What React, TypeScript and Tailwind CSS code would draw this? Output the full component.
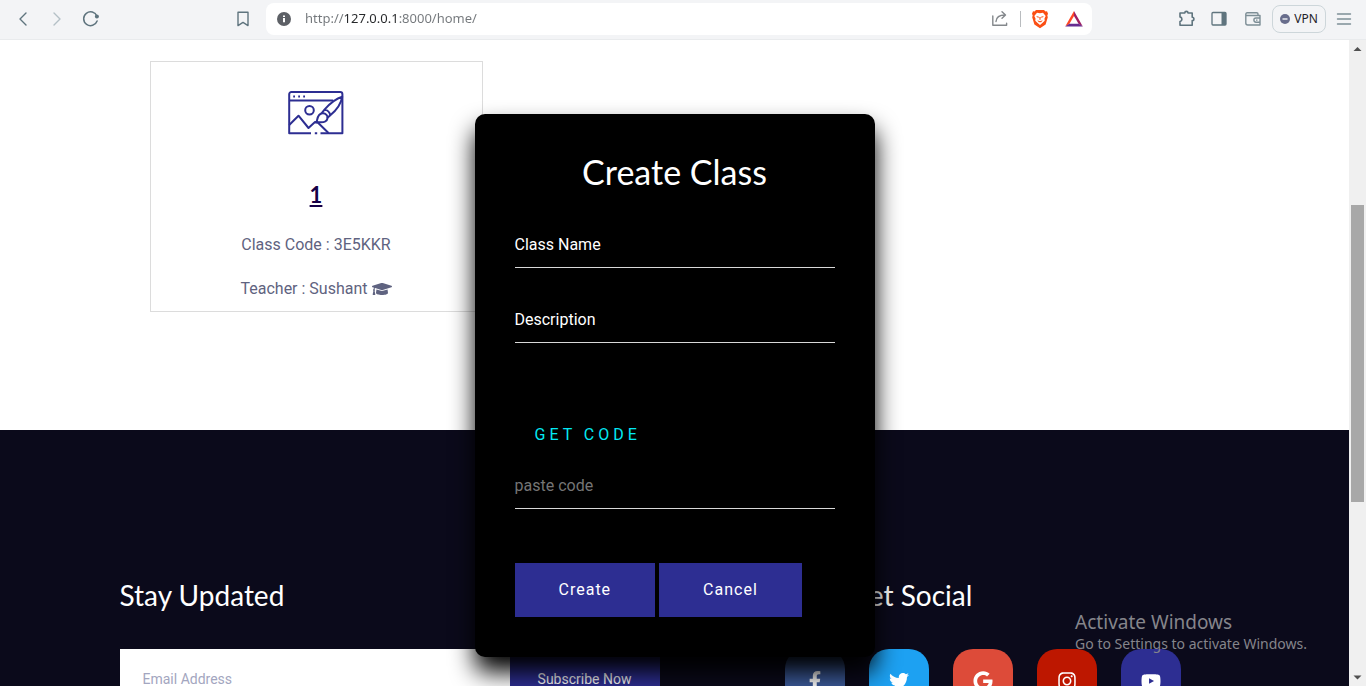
import React from "react";
import { FaFacebookF, FaTwitter, FaGoogle, FaInstagram, FaYoutube, FaGraduationCap } from "react-icons/fa";

const heading = "font-['Lato',sans-serif]";

function ToolButton({ label, className = "", children }: { label: string; className?: string; children: React.ReactNode }) {
  return (
    <button type="button" aria-label={label} className={`flex size-5 shrink-0 items-center justify-center ${className}`}>
      {children}
    </button>
  );
}

function Line({ d, color = "#5f747e", width = 1.4 }: { d: string; color?: string; width?: number }) {
  return (
    <svg viewBox="0 0 20 20" className="size-5" fill="none" stroke={color} strokeWidth={width} strokeLinecap="round" strokeLinejoin="round">
      <path d={d} />
    </svg>
  );
}

function BrowserBar() {
  return (
    <header className="flex h-10 shrink-0 items-center border-b border-[#e9ebed] bg-[#f3f4f6] pr-3 pb-px pl-[13px] font-['Noto_Sans',sans-serif]">
      <ToolButton label="Back"><Line d="M13 4 7 10l6 6" /></ToolButton>
      <ToolButton label="Forward" className="ml-[14px]"><Line d="m7 4 6 6-6 6" color="#b4c0c6" /></ToolButton>
      <ToolButton label="Reload" className="ml-[14px]">
        <svg viewBox="0 0 20 20" className="size-5" fill="none">
          <path d="M16.1 12A6.9 6.9 0 1 1 16 7.2" stroke="#5f747e" strokeWidth="1.5" strokeLinecap="round" />
          <circle cx="15.9" cy="7.6" r="2" fill="#5f747e" />
        </svg>
      </ToolButton>
      <ToolButton label="Bookmark" className="ml-[132px]"><Line d="M5 3.2h10v13.4l-5-3.2-5 3.2z" /></ToolButton>
      <div className="ml-[13px] flex h-8 max-w-[826px] flex-1 items-center rounded-lg bg-white pr-2 pl-2">
        <ToolButton label="Site information">
          <svg viewBox="0 0 20 20" className="size-5">
            <circle cx="10" cy="10" r="7" fill="#5d6066" />
            <path d="M9 9h2v4.3H9zM9 6.4h2v1.7H9z" fill="#fff" />
          </svg>
        </ToolButton>
        <input
          aria-label="Address"
          defaultValue="http://127.0.0.1:8000/home/"
          className="ml-[11px] min-w-0 flex-1 bg-[linear-gradient(90deg,#73777b_39px,#26282a_39px,#26282a_93px,#73777b_93px)] bg-clip-text text-[13px] text-transparent caret-black outline-none"
        />
        <ToolButton label="Share">
          <svg viewBox="0 0 20 20" className="size-5" fill="none" stroke="#84888c" strokeWidth="1.4" strokeLinecap="round" strokeLinejoin="round">
            <path d="M2.800 7v9.300h13.800v-2M6 12.500c.3-4.200 3-6.500 9-6.500M12 2.700 15.500 6 12 9.300" />
          </svg>
        </ToolButton>
        <span className="ml-[10px] h-4 w-px bg-[#b9bcbf]" />
        <ToolButton label="Brave Shields" className="ml-[9px]">
          <svg viewBox="0 0 20 20" className="size-5">
            <path d="M6 1h8l1.500 1.500 1.500-.2 1 2.500-.7 1.700.5 1.700-2.200 7.200L10 19.200l-5.600-3.800L2.200 8.200l.5-1.700L2 4.800l1-2.500 1.500.2z" fill="#fb4f14" />
            <path d="m7 3.700 3 .6 3-.6 2.700 3.200-1.200 2.600.2 2.300L12.300 14 10 16l-2.300-2-2.400-2.200.2-2.300L4.300 6.900z" fill="#fff" />
            <path d="m6 7 3 .8L8.200 9zM14 7l-3 .8.800 1.200zM9.300 8h1.400l-.3 3h-.8zM7.200 11.300l2.800.9 2.800-.9-1.700 2h-2.200z" fill="#fb4f14" />
          </svg>
        </ToolButton>
        <ToolButton label="Brave Rewards" className="ml-[14px]">
          <svg viewBox="0 0 20 20" className="size-5">
            <path d="M10 2 1.200 17.500 5.300 15 10 7z" fill="#ff4724" />
            <path d="M10 2v5l4.700 8 4.100 2.500z" fill="#9e1f63" />
            <path d="M1.200 17.500h17.600L14.700 14.700H5.300z" fill="#662d91" />
          </svg>
        </ToolButton>
      </div>
      <div className="ml-auto flex items-center">
        <ToolButton label="Extensions">
          <svg viewBox="0 0 20 20" className="size-5" fill="none" stroke="#5f747e" strokeWidth="1.6" strokeLinejoin="round">
            <path d="M3 4h4.800a1.600 1.600 0 0 1 3.200 0h4.200v4.200a1.600 1.600 0 0 1 0 3.400V16.200H3v-3.600a2.400 2.400 0 0 0 0-4.700z" />
          </svg>
        </ToolButton>
        <ToolButton label="Sidebar" className="ml-3">
          <svg viewBox="0 0 20 20" className="size-5">
            <rect x="3" y="3.500" width="14" height="12.500" rx="1" fill="none" stroke="#5f747e" strokeWidth="1.300" />
            <path d="M12.500 3.500H17V16h-4.500z" fill="#5f747e" />
          </svg>
        </ToolButton>
        <ToolButton label="Wallet" className="ml-[14px]">
          <svg viewBox="0 0 20 20" className="size-5" fill="none" stroke="#7d8e96" strokeWidth="1.400" strokeLinejoin="round">
            <path d="M15 6.500V5a1.300 1.300 0 0 0-1.300-1.300H4A1.500 1.500 0 0 0 2.800 5v9A2 2 0 0 0 4.800 16H17V6.500H3.500M17 9h-4a2.100 2.100 0 0 0 0 4.200h4M13 11.100h1.500" />
          </svg>
        </ToolButton>
        <button type="button" className="ml-[9px] flex h-7 w-[54px] items-center justify-center gap-1 rounded-lg border border-[#cdd6da] text-xs text-[#1f2328]">
          <svg viewBox="0 0 10 10" className="size-[10px]">
            <circle cx="5" cy="5" r="5" fill="#686d8c" />
            <path d="M2.500 4.300h5v1.400h-5z" fill="#f3f4f6" />
          </svg>
          VPN
        </button>
        <ToolButton label="Menu" className="ml-2"><Line d="M3.500 5h13M3.500 10h13M3.500 15h13" color="#7d8e96" /></ToolButton>
      </div>
    </header>
  );
}

function DesignIcon() {
  return (
    <svg viewBox="0 0 56 44" className="h-11 w-14" fill="none" stroke="#2d2e92" strokeWidth="2" strokeLinejoin="round">
      <path d="M23 42.200H1.200V3.200A2.200 2.200 0 0 1 3.400 1h48.800a2.200 2.200 0 0 1 2.200 2.200V42.200H32.500M26.800 42.200h2.400M1.200 9.600h44" />
      <path d="M5.200 5.500h1.800M10.200 5.500H12M15.200 5.500H17" />
      <circle cx="21.500" cy="19.200" r="4.300" />
      <path d="m1.200 34 9.300-9.300 10 12.300 6.500-6 2.500.3L40.500 42" />
      <path d="M28 31.500c1.600-1.900.8-4.500 3-7.400 2.200-2.800 5.700-2.300 7.500-.3s1.400 5-1.300 6.700-6 .3-9.200 1zM33.500 22.300l3.200-3.900c2.800.8 5 3 5.600 5.800l-3.600 3.200M36.700 18.400C42 12.500 47.500 7.800 54.200 5.800 53 13 48 19.500 42.300 24.200" />
    </svg>
  );
}

function ClassCard() {
  return (
    <article className="flex w-[333px] flex-col items-center border border-[#dcdcdc] pt-[29px] pb-[10px] text-base leading-6 text-[#5f6380]">
      <DesignIcon />
      <h2 className={`${heading} mt-[46px] text-[22px] leading-7 font-bold`}>
        <a href="#class" className="text-[#160048] underline decoration-2 underline-offset-2">1</a>
      </h2>
      <p className="mt-6">Class Code : 3E5KKR</p>
      <p className="mt-5 flex items-center gap-1">Teacher : Sushant <FaGraduationCap size={20} /></p>
    </article>
  );
}

const socials = [
  { name: "Facebook", Icon: FaFacebookF, bg: "bg-[#3b5998]" },
  { name: "Twitter", Icon: FaTwitter, bg: "bg-[#1da1f2]" },
  { name: "Google", Icon: FaGoogle, bg: "bg-[#dd4b39]" },
  { name: "Instagram", Icon: FaInstagram, bg: "bg-[#bd1700]" },
  { name: "YouTube", Icon: FaYoutube, bg: "bg-[#2d2e92]" },
];

function Footer() {
  return (
    <footer className="flex-1 bg-[#0b0a1b] pt-[150px] text-white">
      <div className="mx-auto flex max-w-[1140px]">
        <section className="w-7/12 px-[15px]">
          <h3 className={`${heading} text-[28px] leading-[30px]`}>Stay Updated</h3>
          <form className="mt-[39px] flex h-[60px] max-w-[540px]" onSubmit={(e) => e.preventDefault()}>
            <input
              type="email"
              aria-label="Email Address"
              placeholder="Email Address"
              className="min-w-0 flex-1 bg-white px-[23px] text-sm text-black outline-none placeholder:text-[#a3a6c0]"
            />
            <button type="submit" className="w-[150px] bg-[#2d2e92] text-sm">Subscribe Now</button>
          </form>
        </section>
        <section className="w-5/12 px-[15px]">
          <h3 className={`${heading} pl-16 text-[28px] leading-[30px]`}>Get Social</h3>
          <nav className="mt-[39px] flex gap-6">
            {socials.map(({ name, Icon, bg }) => (
              <a key={name} href={`#${name}`} aria-label={name} className={`flex size-[60px] items-center justify-center rounded-[20px] pt-1 ${bg}`}>
                <Icon size={20} />
              </a>
            ))}
          </nav>
        </section>
      </div>
    </footer>
  );
}

function Field({ id, label }: { id: string; label: string }) {
  return (
    <div className="relative mb-8">
      <input id={id} className="block h-[43px] w-full border-b border-[#d8d8d8] bg-transparent text-base text-white outline-none" />
      <label htmlFor={id} className="pointer-events-none absolute top-2 left-0 text-base leading-6 text-white">{label}</label>
    </div>
  );
}

function CreateClassDialog() {
  const button = "h-[54px] bg-[#2d2e92] px-11 text-base tracking-[1px]";
  return (
    <div className="absolute inset-0 flex items-start justify-center pt-[74px]">
      <div role="dialog" aria-labelledby="dialog-title" className="w-[400px] rounded-[10px] bg-black p-10 text-white shadow-[0_15px_25px_#000]">
        <h1 id="dialog-title" className={`${heading} mb-[35px] text-center text-[34px] leading-9`}>Create Class</h1>
        <form onSubmit={(e) => e.preventDefault()}>
          <Field id="class-name" label="Class Name" />
          <Field id="description" label="Description" />
          <a href="#code" className="mt-[72px] mb-[11px] block w-fit px-5 py-2 text-base leading-6 tracking-[4px] text-[#03e9f4] uppercase">Get code</a>
          <input
            aria-label="Class code"
            placeholder="paste code"
            className="block h-[43px] w-full border-b border-[#d8d8d8] bg-transparent pb-1 text-base outline-none placeholder:text-[#757575]"
          />
          <div className="mt-[54px] flex gap-1">
            <button type="submit" className={button}>Create</button>
            <button type="button" className={button}>Cancel</button>
          </div>
        </form>
      </div>
    </div>
  );
}

function Scrollbar() {
  return (
    <div aria-hidden="true" className="flex w-[17px] shrink-0 flex-col items-center bg-[#f0f0f0]">
      <svg viewBox="0 0 17 17" className="size-[17px] shrink-0"><path d="m4.500 11 4-4 4 4z" fill="#505050" /></svg>
      <div className="mt-[148px] h-[297px] w-[13px] bg-[#a8a8a8]" />
      <svg viewBox="0 0 17 17" className="mt-auto size-[17px] shrink-0"><path d="m4.500 6.500 4 4 4-4z" fill="#505050" /></svg>
    </div>
  );
}

export default function App() {
  return (
    <div className="flex h-screen flex-col overflow-hidden bg-white font-['Roboto',sans-serif]">
      <BrowserBar />
      <div className="flex min-h-0 flex-1">
        <div className="relative flex min-w-0 flex-1 flex-col overflow-hidden">
          <main className="shrink-0 pt-[21px] pb-[118px]">
            <div className="mx-auto max-w-[1140px] px-[45px]">
              <ClassCard />
            </div>
          </main>
          <Footer />
          <CreateClassDialog />
          <div className="pointer-events-none absolute right-[42px] bottom-8 font-['Noto_Sans',sans-serif] text-[#85858b]">
            <p className="text-[19px] leading-6">Activate Windows</p>
            <p className="text-sm leading-5">Go to Settings to activate Windows.</p>
          </div>
        </div>
        <Scrollbar />
      </div>
    </div>
  );
}
